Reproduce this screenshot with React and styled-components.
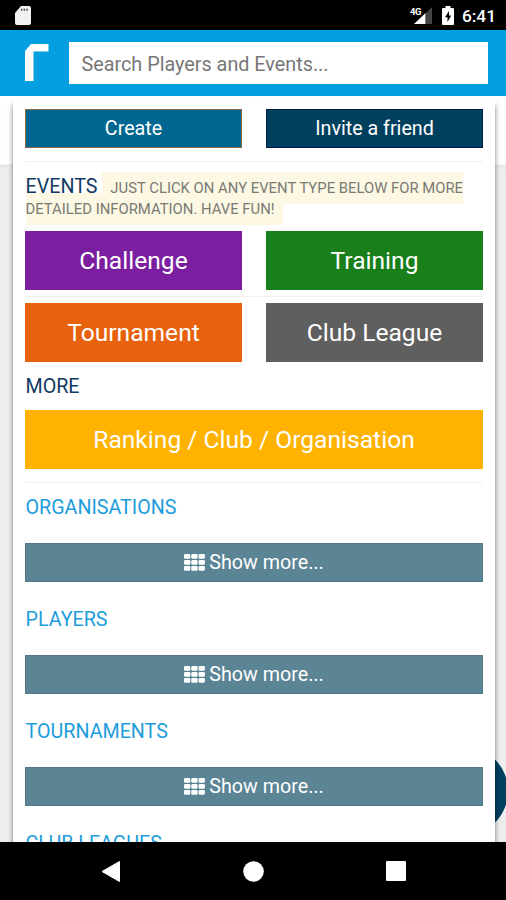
import React from 'react'
import styled, { createGlobalStyle } from 'styled-components'

const GlobalStyle = createGlobalStyle`
    * {
        box-sizing: border-box;
    }
    body {
        margin: 0;
        font-family: Roboto, sans-serif;
    }
`

const Screen = styled.div`
    position: relative;
    display: flex;
    flex-direction: column;
    width: 506px;
    height: 900px;
    overflow: hidden;
    background: #000;
`

const StatusBar = styled.div`
    display: flex;
    align-items: center;
    height: 30px;
    padding: 0 10px 0 15px;
    color: #fff;
`

const StatusIcons = styled.div`
    display: flex;
    align-items: center;
    margin-left: auto;
`

const BatteryIcon = styled.svg`
    margin-left: 9px;
`

const Clock = styled.span`
    margin-left: 8px;
    padding-top: 2px;
    font-size: 17.3px;
    line-height: 20px;
    font-weight: 500;
`

const Header = styled.header`
    display: flex;
    align-items: center;
    height: 66px;
    padding: 0 18px 0 25px;
    background: #039fe0;
`

const Logo = styled.svg`
    display: block;
    margin: 0 20px 1px 0;
`

const Search = styled.input`
    flex: 1;
    min-width: 0;
    height: 42px;
    padding: 2px 12px 0 12.5px;
    border: none;
    border-radius: 0;
    outline: none;
    background: #fff;
    font-family: Roboto, sans-serif;
    font-size: 19.8px;
    color: #333;
    &::placeholder {
        color: #777;
        opacity: 1;
    }
`

const Page = styled.main`
    position: relative;
    height: 746px;
    padding: 4px 11px 0 13px;
    overflow: hidden;
    background: linear-gradient(#fff 68px, #e6e6e6 69px, #eee 74px);
`

const Panel = styled.section`
    position: relative;
    height: 760px;
    padding: 9px 12px 0;
    background: #fff;
    box-shadow: 0 5px 5px rgba(0, 0, 0, 0.5);
`

const Fab = styled.div`
    position: absolute;
    left: 418px;
    top: 650px;
    width: 90px;
    height: 90px;
    border-radius: 50%;
    background: #00405f;
`

const Row = styled.div`
    display: grid;
    grid-template-columns: ${props => props.$single ? '1fr' : '1fr 1fr'};
    column-gap: 24px;
`

const Button = styled.button`
    display: flex;
    align-items: center;
    justify-content: center;
    height: 39px;
    padding: 0;
    border: 1px solid ${props => props.$border || props.$bg};
    background: ${props => props.$bg};
    color: #fff;
    font-family: Roboto, sans-serif;
    font-size: 19.7px;
    line-height: 23px;
`

const TypeButton = styled(Button)`
    height: 59px;
    font-size: 24.6px;
    line-height: 29px;
`

const MoreButton = styled(Button)`
    width: 100%;
    gap: 4px;
`

const Divider = styled.hr`
    height: 1px;
    margin: ${props => props.$margin};
    border: none;
    background: #f0f0f0;
`

const Heading = styled.h2`
    height: ${props => props.$height}px;
    margin: 0;
    padding: ${props => props.$top}px 0 0 0.5px;
    font-size: 19.7px;
    line-height: 21px;
    font-weight: 400;
    text-transform: uppercase;
    white-space: nowrap;
    color: ${props => props.$color};
`

const Hint = styled.small`
    padding: 7px 8px;
    background: #fcf8e3;
    color: #7a7a74;
    font-size: 14.85px;
    line-height: 1;
`

const NavBar = styled.nav`
    display: flex;
    justify-content: space-between;
    align-items: center;
    height: 58px;
    padding: 0 100px 0 101px;
`

const SdCard = () => (
    <svg width="16" height="19" viewBox="0 0 16 19">
        <path d="M6 0h8a2 2 0 0 1 2 2v15a2 2 0 0 1-2 2H2a2 2 0 0 1-2-2V7z" fill="#f2f2f2"/>
        <path d="M6.600 2.800v2M9.300 2.800v2M12 2.800v2" stroke="#444" strokeWidth="1.400"/>
    </svg>
)

const Signal = () => (
    <svg width="23" height="20" viewBox="0 0 23 20">
        <path d="M22 2v17h-6V8z" fill="#444"/>
        <path d="M15.500 8v11H4z" fill="#fff"/>
        <text x="0" y="9.500" fill="#fff" fontSize="9.500" fontWeight="700" textLength="11.500">4G</text>
    </svg>
)

const Battery = () => (
    <BatteryIcon width="12" height="19" viewBox="0 0 12 19">
        <path d="M3.500 0h5v2H11a1 1 0 0 1 1 1v15a1 1 0 0 1-1 1H1a1 1 0 0 1-1-1V3a1 1 0 0 1 1-1h2.500z" fill="#fff"/>
        <path d="M7 5L3 11.300h2.500V16L9.200 9.500H7z" fill="#000"/>
    </BatteryIcon>
)

const Grid = () => (
    <svg width="21" height="17" viewBox="0 0 21 17" fill="#fff">
        {[0, 6, 12].map(y => [0, 7.3, 14.6].map(x => (
            <rect key={`${x}-${y}`} x={x} y={y} width="6.300" height="4.800" rx="1.200"/>
        )))}
    </svg>
)

const sections = ['Organisations', 'Players', 'Tournaments']

const App = () => (
    <Screen>
        <GlobalStyle/>
        <StatusBar>
            <SdCard/>
            <StatusIcons>
                <Signal/>
                <Battery/>
                <Clock>6:41</Clock>
            </StatusIcons>
        </StatusBar>
        <Header>
            <Logo width="24" height="37" viewBox="0 0 24 37">
                <path d="M0 37V7L6 0h17.500v7.500H8.500V37z" fill="#fff"/>
            </Logo>
            <Search placeholder="Search Players and Events..."/>
        </Header>
        <Page>
            <Fab/>
            <Panel>
                <Row>
                    <Button $bg="#006791" $border="#8a6a3c">Create</Button>
                    <Button $bg="#00405f" $border="#001c4a">Invite a friend</Button>
                </Row>
                <Divider $margin="13px 0 0"/>
                <Heading $color="#123a63" $height={69} $top={14}>
                    Events <Hint>Just click on any event type below for more<br/>detailed information. Have fun!</Hint>
                </Heading>
                <Row>
                    <TypeButton $bg="#7b1fa0">Challenge</TypeButton>
                    <TypeButton $bg="#187f1b">Training</TypeButton>
                </Row>
                <Divider $margin="6px 0"/>
                <Row>
                    <TypeButton $bg="#e8610c">Tournament</TypeButton>
                    <TypeButton $bg="#5f5f5f">Club League</TypeButton>
                </Row>
                <Heading $color="#123a63" $height={48} $top={14}>More</Heading>
                <Row $single>
                    <TypeButton $bg="#ffb300">Ranking / Club / Organisation</TypeButton>
                </Row>
                <Divider $margin="13px 0 0"/>
                {sections.map((name, i) => (
                    <React.Fragment key={name}>
                        <Heading $color="#1d9ddb" $height={i ? 73 : 60} $top={i ? 27 : 14}>{name}</Heading>
                        <MoreButton $bg="#5b8494" $border="#517785"><Grid/>Show more...</MoreButton>
                    </React.Fragment>
                ))}
                <Heading $color="#1d9ddb" $height={73} $top={27}>Club Leagues</Heading>
            </Panel>
        </Page>
        <NavBar>
            <svg width="19" height="21" viewBox="0 0 19 21"><path d="M18.500.5v20L1 10.500z" fill="#fff" stroke="#fff" strokeLinejoin="round"/></svg>
            <svg width="21" height="21" viewBox="0 0 21 21"><circle cx="10.500" cy="10.500" r="10.300" fill="#fff"/></svg>
            <svg width="20" height="20" viewBox="0 0 20 20"><rect width="20" height="20" rx="1" fill="#fff"/></svg>
        </NavBar>
    </Screen>
)

export default App
